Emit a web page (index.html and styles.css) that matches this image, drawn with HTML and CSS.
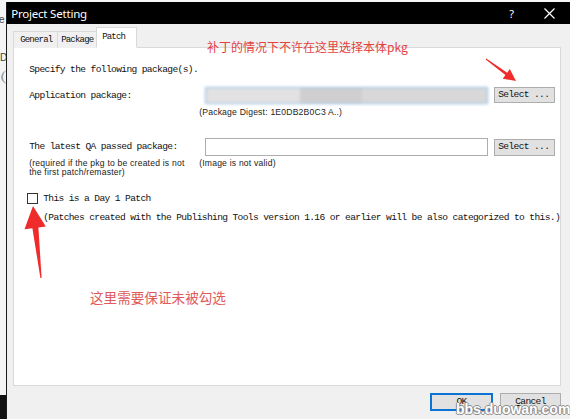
FILE: index.html
```html
<!DOCTYPE html>
<html>
<head>
<meta charset="utf-8">
<title>Project Setting</title>
<link rel="stylesheet" href="styles.css">
</head>
<body>
<div class="screen">
  <div class="desk">
    <span class="frag f1">e</span>
    <span class="frag f2">Di</span>
    <span class="blob"></span>
    <span class="deskfill"></span>
    <span class="deskfoot"></span>
  </div>
  <div class="dialog">
    <div class="titlebar">
      <span class="title">Project Setting</span>
      <span class="help">?</span>
      <svg class="close" width="11" height="11" viewBox="0 0 11 11"><path d="M0.5 0.5 L10.5 10.5 M10.5 0.5 L0.5 10.5" stroke="#fff" stroke-width="1.2" fill="none"/></svg>
    </div>
    <div class="client">
      <div class="tabs">
        <span class="tab">General</span>
        <span class="tab">Package</span>
        <span class="tab active">Patch</span>
      </div>
      <div class="panel">
        <p class="intro">Specify the following package(s).</p>
        <div class="row row-app">
          <span class="label">Application package:</span>
          <span class="field blurred"><span class="b1"></span><span class="b2"></span><span class="b3"></span></span>
          <span class="btn select">Select ...</span>
        </div>
        <div class="subrow sub-app">
          <span class="hint">(Package Digest: 1E0DB2B0C3 A..)</span>
        </div>
        <div class="row row-qa">
          <span class="label">The latest QA passed package:</span>
          <span class="field"></span>
          <span class="btn select">Select ...</span>
        </div>
        <div class="subrow sub-qa">
          <span class="hint req">(required if the pkg to be created is not<br>the first patch/remaster)</span>
          <span class="hint">(Image is not valid)</span>
        </div>
        <div class="check-row">
          <span class="checkbox"></span>
          <span class="check-label">This is a Day 1 Patch</span>
        </div>
        <p class="note">(Patches created with the Publishing Tools version 1.16 or earlier will be also categorized to this.)</p>
      </div>
      <div class="footer">
        <span class="btn ok"><u>O</u>K</span>
        <span class="btn cancel"><u>C</u>ancel</span>
      </div>
    </div>
  </div>

  <div class="note-red top-note">补丁的情况下不许在这里选择本体pkg</div>
  <div class="note-red bottom-note">这里需要保证未被勾选</div>
  <svg class="arrows" width="570" height="419" viewBox="0 0 570 419">
    <polygon fill="#ef2b2b" points="485.7,59.4 486.3,58.6 507.2,72.7 509.8,69.1 516,81 502.8,78.7 505.4,75.1"/>
    <polygon fill="#ef2b2b" points="41.6,278 40.4,278 32.4,228.2 24.5,229.2 33,206 45.8,226.6 38.4,227.6"/>
  </svg>
  <div class="watermark">bbs.duowan.com</div>
</div>
</body>
</html>
```

FILE: styles.css
```css
* { box-sizing: border-box; }

html, body {
  margin: 0;
  padding: 0;
  background: #ffffff;
}

.screen {
  position: relative;
  width: 570px;
  height: 419px;
  display: flex;
  overflow: hidden;
  background: #f7f7f7;
}

/* desktop strip on the left */
.desk {
  width: 7px;
  display: flex;
  flex-direction: column;
  overflow: hidden;
  background: #f4f4f4;
  font-family: "Liberation Sans", sans-serif;
  color: #444;
}
.frag {
  font-size: 10px;
  line-height: 10px;
  white-space: nowrap;
}
.f1 { margin-top: 15px; margin-left: -1px; }
.f2 { margin-top: 28px; margin-left: 0; }
.blob {
  display: block;
  width: 16px;
  height: 14px;
  margin-top: 7px;
  margin-left: 1px;
  border-left: 2px solid #9aa7b3;
  border-radius: 50%;
}
.deskfill { flex: 1; }
.deskfoot {
  display: block;
  height: 24px;
  background: #111;
}

/* dialog */
.dialog {
  flex: 1;
  display: flex;
  flex-direction: column;
  margin-top: 2px;
  border-left: 1px solid #1a1a1a;
}

.titlebar {
  height: 22px;
  background: #000;
  color: #fff;
  display: flex;
  align-items: center;
  padding: 0 15px 0 4px;
  flex-shrink: 0;
}
.title {
  font-family: "Noto Sans", "Liberation Sans", sans-serif;
  font-size: 11.5px;
  letter-spacing: -0.2px;
}
.help {
  margin-left: auto;
  margin-right: 30px;
  font-family: "Noto Sans", sans-serif;
  font-size: 11px;
}
.close { display: block; }

.client {
  flex: 1;
  background: #f0f0f0;
  display: flex;
  flex-direction: column;
  padding: 4px 9px 0 6px;
  font-family: "Liberation Mono", monospace;
  font-size: 9.6px;
  letter-spacing: -0.64px;
  color: #111;
}

.tabs {
  height: 20px;
  display: flex;
  align-items: flex-end;
  position: relative;
  z-index: 1;
  margin-bottom: -1px;
}
.tab {
  height: 17px;
  line-height: 16px;
  padding-left: 6px;
  border: 1px solid #d9d9d9;
  border-bottom: none;
  background: #f0f0f0;
  font-size: 9px;
  letter-spacing: -0.8px;
  white-space: nowrap;
}
.tab:nth-child(1) { width: 45px; }
.tab:nth-child(2) { width: 40px; margin-left: -1px; padding-left: 3px; }
.tab.active {
  width: 41px;
  height: 21px;
  line-height: 19px;
  margin-left: -1px;
  padding-left: 5px;
  background: #fff;
  border-bottom: 1px solid #fff;
}

.panel {
  height: 339px;
  background: #fff;
  border: 1px solid #d9d9d9;
  padding: 16px 0 0 15px;
  display: flex;
  flex-direction: column;
}

.intro {
  margin: 0;
  line-height: 12px;
  height: 12px;
}

.row {
  display: grid;
  grid-template-columns: 170px 283px 61px;
  column-gap: 6px;
  align-items: center;
}
.row-app { margin-top: 11px; height: 17px; }
.row-qa { margin-top: 21px; height: 18px; }

.label { line-height: 12px; white-space: nowrap; }

.field {
  display: block;
  height: 100%;
  border: 1px solid #adadad;
  background: #fff;
}
.blurred {
  display: flex;
  border: 1px solid #8ab8e6;
  background: #dadada;
  filter: blur(1.4px);
  overflow: hidden;
}
.blurred .b1 { flex: 3; background: #e2e2e2; }
.blurred .b2 { flex: 2; background: #cfcfcf; }
.blurred .b3 { flex: 4; background: #d8d8d8; }

.btn {
  display: flex;
  align-items: center;
  height: 100%;
  background: #e1e1e1;
  border: 1px solid #adadad;
  line-height: 12px;
  white-space: nowrap;
}
.select { padding-left: 3px; height: 17px; }
.row-app .select { align-self: start; height: 16px; }

.subrow {
  display: flex;
  font-family: "Liberation Sans", sans-serif;
  font-size: 8.6px;
  letter-spacing: 0.2px;
  color: #222;
}
.sub-app {
  margin-top: 3px;
  padding-left: 170px;
  line-height: 10px;
}
.sub-qa {
  margin-top: 3px;
  line-height: 9px;
}
.req { width: 170px; white-space: nowrap; }

.check-row {
  display: flex;
  align-items: center;
  margin-top: 16px;
  margin-left: -2px;
  height: 11px;
}
.checkbox {
  width: 11px;
  height: 11px;
  border: 1px solid #333;
  background: #fff;
  margin-right: 5px;
}
.check-label { line-height: 12px; }

.note {
  margin: 8px 0 0 14px;
  line-height: 12px;
  white-space: nowrap;
}

.footer {
  display: flex;
  justify-content: flex-end;
  gap: 7px;
  padding: 7px 0 0 0;
}
.footer .btn {
  height: 18px;
  justify-content: center;
}
.ok {
  width: 63px;
  border: 2px solid #0a74d4;
}
.cancel { width: 61px; }
.footer u { text-decoration-thickness: 1px; text-underline-offset: 1px; }

/* overlays: annotations drawn over the screenshot */
.note-red {
  position: absolute;
  font-family: "Noto Sans CJK SC", sans-serif;
  white-space: nowrap;
}
.top-note {
  left: 207px;
  top: 38px;
  font-size: 12px;
  line-height: 18px;
  color: #e2433f;
}
.bottom-note {
  left: 90px;
  top: 287px;
  font-size: 13.6px;
  line-height: 20px;
  color: #e05a5a;
}
.arrows {
  position: absolute;
  left: 0;
  top: 0;
  pointer-events: none;
}
.watermark {
  position: absolute;
  left: 456px;
  top: 401px;
  font-family: "Liberation Sans", sans-serif;
  font-weight: bold;
  font-size: 14px;
  line-height: 16px;
  color: #fff;
  text-shadow: 1px 0 #8d8d8d, -1px 0 #8d8d8d, 0 1px #8d8d8d, 0 -1px #8d8d8d;
}
```
